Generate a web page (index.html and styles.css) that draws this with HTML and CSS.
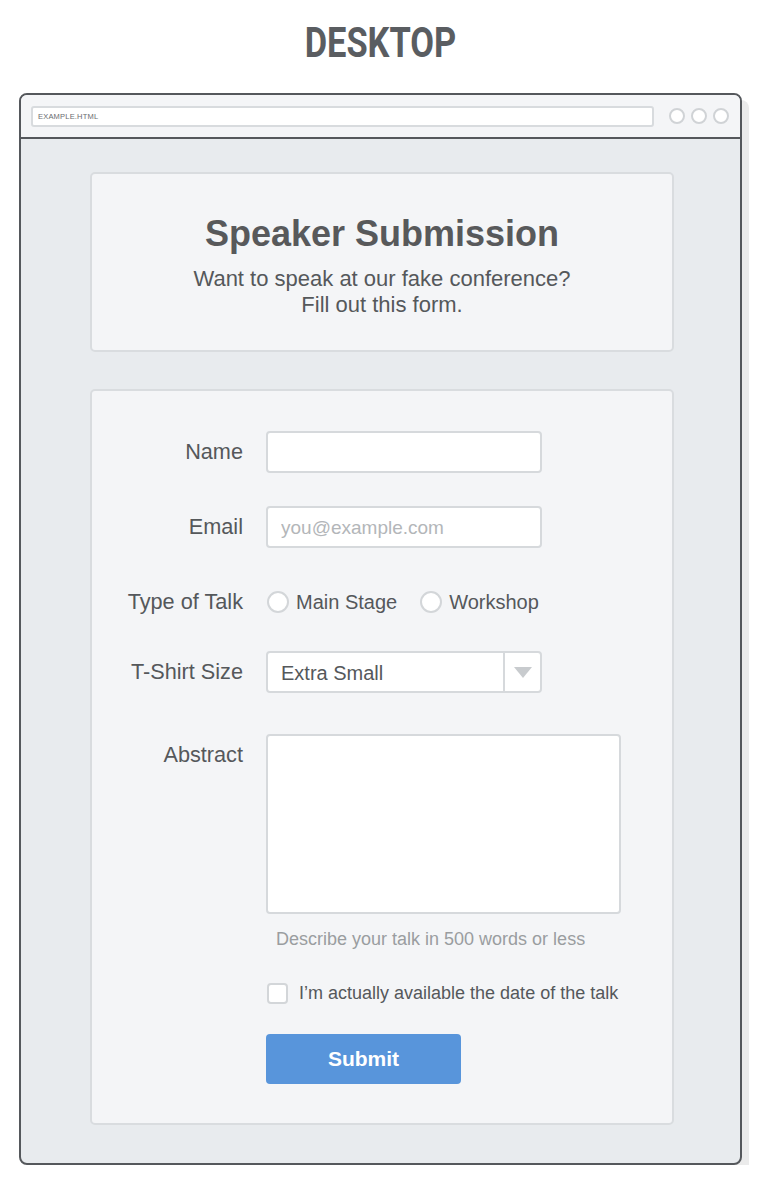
FILE: index.html
```html
<!DOCTYPE html>
<html>
<head>
<meta charset="utf-8">
<link rel="stylesheet" href="styles.css">
</head>
<body>
<h1 class="page-title"><span class="page-title-text">DESKTOP</span></h1>
<div class="browser">
  <div class="toolbar">
    <div class="url">EXAMPLE.HTML</div>
    <div class="dots"><span class="dot"></span><span class="dot"></span><span class="dot"></span></div>
  </div>
  <div class="content">
    <div class="card header-card">
      <h2 class="form-title">Speaker Submission</h2>
      <p class="form-sub">Want to speak at our fake conference?<br>Fill out this form.</p>
    </div>
    <form class="card form-card">
      <div class="row row-name">
        <label class="label">Name</label>
        <input class="input" type="text">
      </div>
      <div class="row row-email">
        <label class="label">Email</label>
        <input class="input" type="text" placeholder="you@example.com">
      </div>
      <div class="row row-type">
        <label class="label">Type of Talk</label>
        <div class="radios">
          <span class="radio-opt"><span class="radio"></span>Main Stage</span>
          <span class="radio-opt"><span class="radio"></span>Workshop</span>
        </div>
      </div>
      <div class="row row-size">
        <label class="label">T-Shirt Size</label>
        <div class="select">
          <span class="select-value">Extra Small</span>
          <span class="select-arrow"><span class="tri"></span></span>
        </div>
      </div>
      <div class="row row-abstract">
        <label class="label">Abstract</label>
        <div class="textarea"></div>
      </div>
      <div class="hint">Describe your talk in 500 words or less</div>
      <div class="check-row"><span class="checkbox"></span>I’m actually available the date of the talk</div>
      <div class="btn-row"><button class="submit" type="button">Submit</button></div>
    </form>
  </div>
</div>
</body>
</html>
```
FILE: styles.css
```css
* { box-sizing: border-box; }
body {
  margin: 0;
  background: #ffffff;
  font-family: "Liberation Sans", Arial, sans-serif;
  color: #55585b;
}
.page-title {
  margin: 0;
  padding-top: 22px;
  height: 64px;
  line-height: 42px;
  text-align: center;
  font-family: Roboto, "DejaVu Sans", sans-serif;
  font-weight: 700;
  font-size: 42px;
  color: #5a5d61;
  padding-left: 2px;
}
.page-title-text {
  display: inline-block;
  transform: scaleX(0.82);
  transform-origin: center;
}
.browser {
  margin: 29px 0 0 19px;
  width: 723px;
  border: 2px solid #55585c;
  border-radius: 8px;
  box-shadow: 7px 7px 0 #ebebeb;
  overflow: hidden;
  background: #e8ebee;
}
.toolbar {
  height: 44px;
  background: #f4f5f7;
  border-bottom: 2px solid #55585c;
  display: flex;
  align-items: center;
  padding: 0 11px 0 10px;
  gap: 15px;
}
.url {
  flex: 1;
  height: 21px;
  background: #fff;
  border: 2px solid #d8dbde;
  border-radius: 3px;
  font-size: 7.5px;
  line-height: 17px;
  padding-left: 5px;
  color: #6a6d70;
  letter-spacing: 0.2px;
}
.dots { display: flex; gap: 6px; }
.dot {
  width: 16px;
  height: 16px;
  border: 2px solid #d0d3d6;
  border-radius: 50%;
  background: #fff;
}
.content {
  padding: 33px 66px 38px 69px;
}
.card {
  background: #f4f5f7;
  border: 2px solid #d9dcdf;
  border-radius: 5px;
}
.header-card {
  height: 180px;
  padding-top: 38px;
  text-align: center;
}
.form-title {
  margin: 0;
  font-size: 36px;
  line-height: 44px;
  font-weight: 700;
  color: #58595b;
}
.form-sub {
  margin: 10px 0 0;
  font-size: 22px;
  line-height: 26px;
  color: #55585b;
}
.form-card {
  margin: 37px 0 0;
  padding: 40px 0 39px;
}
.row { display: flex; align-items: flex-start; }
.label {
  width: 151px;
  margin-right: 23px;
  text-align: right;
  font-size: 21.7px;
  line-height: 42px;
  color: #55585b;
}
.input {
  width: 276px;
  height: 42px;
  border: 2px solid #d6d9dc;
  border-radius: 4px;
  background: #fff;
  padding: 2px 13px 0;
  font-family: "Liberation Sans", Arial, sans-serif;
  font-size: 19px;
  color: #55585b;
  outline: none;
  margin: 0;
}
.input::placeholder { color: #b3b6b9; }
.row-name, .row-email { margin-bottom: 33px; }
.row-type { margin-bottom: 28px; }
.radios {
  display: flex;
  align-items: center;
  height: 42px;
  gap: 22px;
  font-size: 20px;
  color: #55585b;
}
.radio-opt { display: flex; align-items: center; gap: 7px; }
.radio {
  width: 22px;
  height: 22px;
  border: 2px solid #d3d6d9;
  border-radius: 50%;
  background: #fff;
  margin-left: 1px;
}
.row-size { margin-bottom: 41px; }
.select {
  width: 276px;
  height: 42px;
  border: 2px solid #d6d9dc;
  border-radius: 4px;
  background: #fff;
  display: flex;
  align-items: stretch;
}
.select-value {
  flex: 1;
  padding-left: 13px;
  font-size: 20px;
  line-height: 40px;
  color: #55585b;
}
.select-arrow {
  width: 37px;
  border-left: 2px solid #d6d9dc;
  display: flex;
  align-items: center;
  justify-content: center;
}
.tri {
  width: 0;
  height: 0;
  border-left: 9px solid transparent;
  border-right: 9px solid transparent;
  border-top: 11px solid #c8cbce;
}
.textarea {
  width: 355px;
  height: 180px;
  border: 2px solid #d6d9dc;
  border-radius: 4px;
  background: #fff;
}
.hint {
  margin: 15px 0 0 184px;
  font-size: 18px;
  line-height: 20px;
  color: #9a9da0;
}
.check-row {
  margin: 33px 0 0 175px;
  display: flex;
  align-items: center;
  gap: 11px;
  font-size: 18px;
  line-height: 22px;
  color: #55585b;
}
.checkbox {
  width: 21px;
  height: 21px;
  border: 2px solid #d3d6d9;
  border-radius: 4px;
  background: #fff;
}
.btn-row { margin: 30px 0 0 174px; }
.submit {
  width: 195px;
  height: 50px;
  border: none;
  border-radius: 4px;
  background: #5895db;
  color: #fff;
  font-family: "Liberation Sans", Arial, sans-serif;
  font-weight: 700;
  font-size: 21px;
  padding: 0;
  display: block;
}
```
